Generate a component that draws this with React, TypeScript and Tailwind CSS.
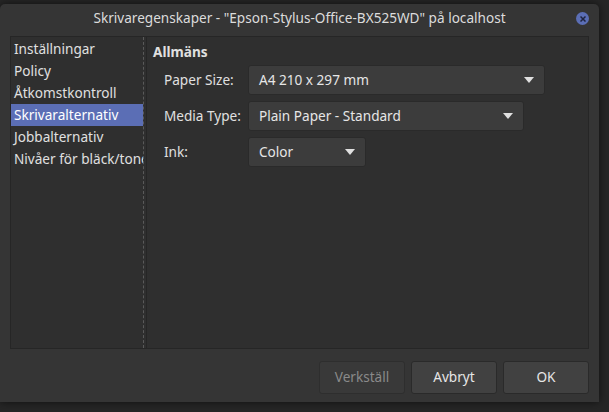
import React from "react";

const Caret = () => (
  <svg width="10" height="6" viewBox="0 0 10 6"><path d="M0 0h10L5 6z" fill="#e0e0e0" /></svg>
);

const Select = ({ text, w }: { text: string; w: string }) => (
  <div className={`${w} h-[30px] flex items-center justify-between pl-[10px] pr-[10px] rounded-[3px] border border-[#2a2a2a] bg-[#3c3c3c] text-[#e6e6e6]`}>
    <span>{text}</span>
    <Caret />
  </div>
);

export default function App() {
  const items = ["Inställningar", "Policy", "Åtkomstkontroll", "Skrivaralternativ", "Jobbalternativ", "Nivåer för bläck/toner"];
  return (
    <div className="w-[609px] h-[412px] bg-[#262626] pt-[4px] pl-0 text-[13.6px]" style={{ fontFamily: '"Noto Sans", "DejaVu Sans", sans-serif' }}>
      <div className="w-[599px] h-[398px] bg-[#353535] rounded-t-[5px] shadow-[0_0_8px_rgba(0,0,0,0.6)] flex flex-col">
        <div className="h-[28px] relative flex items-center justify-center text-[#dcdcdc] text-[13.6px]">
          Skrivaregenskaper - "Epson-Stylus-Office-BX525WD" på localhost
          <div className="absolute right-[10px] top-[8px] w-[13px] h-[13px] rounded-full bg-[#5b6eb5] flex items-center justify-center">
            <svg width="6" height="6" viewBox="0 0 6 6"><path d="M0.5 0.5L5.5 5.5M5.5 0.5L0.5 5.5" stroke="#1f2440" strokeWidth="1.5" /></svg>
          </div>
        </div>
        <div className="mx-[10px] mt-[4px] h-[313px] flex border border-[#262626] bg-[#2f2f2f]">
          <div className="w-[133px] pt-[1px] overflow-hidden border-r border-dashed border-[#5a5a5a] text-[#e0e0e0]">
            {items.map((t, i) => (
              <div key={t} className={`h-[22px] pl-[3px] flex items-center whitespace-nowrap ${i === 3 ? "bg-[#5b6eb5] text-white" : ""}`}>{t}</div>
            ))}
          </div>
          <div className="w-[3px] border-r border-[#262626]" />
          <div className="flex-1 pl-[6px] pt-[5px] text-[#e0e0e0]">
            <div className="font-bold mb-[3px]">Allmäns</div>
            <div className="flex flex-col gap-[6px] pl-[11px]">
              <div className="flex items-center"><span className="w-[84px]">Paper Size:</span><Select text="A4 210 x 297 mm" w="w-[297px]" /></div>
              <div className="flex items-center"><span className="w-[84px]">Media Type:</span><Select text="Plain Paper - Standard" w="w-[276px]" /></div>
              <div className="flex items-center"><span className="w-[84px]">Ink:</span><Select text="Color" w="w-[118px]" /></div>
            </div>
          </div>
        </div>
        <div className="flex justify-end gap-[6px] pr-[10px] mt-[12px]">
          <div className="w-[86px] h-[33px] rounded-[3px] border border-[#2e2e2e] bg-[#393939] flex items-center justify-center text-[#8a8a8a]">Verkställ</div>
          <div className="w-[86px] h-[33px] rounded-[3px] border border-[#2a2a2a] bg-[#414141] flex items-center justify-center text-[#e6e6e6]">Avbryt</div>
          <div className="w-[86px] h-[33px] rounded-[3px] border border-[#2a2a2a] bg-[#414141] flex items-center justify-center text-[#e6e6e6]">OK</div>
        </div>
      </div>
    </div>
  );
}
